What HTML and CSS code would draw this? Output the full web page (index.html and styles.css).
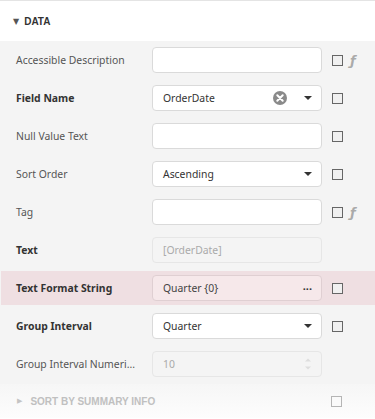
FILE: index.html
```html
<!DOCTYPE html>
<html>
<head>
<meta charset="utf-8">
<link rel="stylesheet" href="styles.css">
</head>
<body>
<div class="panel">
  <div class="section-header"><span class="caret">▼</span><span class="section-title">DATA</span></div>
  <div class="rows">
    <div class="row">
      <div class="label">Accessible Description</div>
      <div class="field"></div>
      <span class="check"></span>
      <span class="fx">ƒ</span>
    </div>
    <div class="row">
      <div class="label bold">Field Name</div>
      <div class="field"><span class="value">OrderDate</span>
        <svg class="clear" width="14" height="14" viewBox="0 0 14 14"><circle cx="7" cy="7" r="7" fill="#8a8a8a"/><path d="M4.3 4.3L9.7 9.7M9.7 4.3L4.3 9.7" stroke="#fff" stroke-width="2" stroke-linecap="round"/></svg>
        <svg class="dd" width="8" height="4" viewBox="0 0 8 4"><path d="M0 0H8L4 4Z" fill="#333"/></svg>
      </div>
      <span class="check"></span>
    </div>
    <div class="row">
      <div class="label">Null Value Text</div>
      <div class="field"></div>
      <span class="check"></span>
    </div>
    <div class="row">
      <div class="label">Sort Order</div>
      <div class="field"><span class="value">Ascending</span>
        <svg class="dd" width="8" height="4" viewBox="0 0 8 4"><path d="M0 0H8L4 4Z" fill="#333"/></svg>
      </div>
      <span class="check"></span>
    </div>
    <div class="row">
      <div class="label">Tag</div>
      <div class="field"></div>
      <span class="check"></span>
      <span class="fx">ƒ</span>
    </div>
    <div class="row">
      <div class="label bold">Text</div>
      <div class="field disabled"><span class="value">[OrderDate]</span></div>
    </div>
    <div class="row highlight">
      <div class="label bold">Text Format String</div>
      <div class="field pink"><span class="value">Quarter {0}</span><span class="dots">···</span></div>
      <span class="check"></span>
    </div>
    <div class="row">
      <div class="label bold">Group Interval</div>
      <div class="field"><span class="value">Quarter</span>
        <svg class="dd" width="8" height="4" viewBox="0 0 8 4"><path d="M0 0H8L4 4Z" fill="#333"/></svg>
      </div>
      <span class="check"></span>
    </div>
    <div class="row">
      <div class="label">Group Interval Numeri...</div>
      <div class="field disabled"><span class="value">10</span>
        <svg class="spin" width="8" height="14" viewBox="0 0 8 14"><path d="M1 4.5L4 1.5L7 4.5Z" fill="#ddd"/><path d="M1 9.5L4 12.5L7 9.5Z" fill="#ddd"/></svg>
      </div>
    </div>
  </div>
  <div class="sub-header">
    <span class="caret-r">▶</span><span class="sub-title">SORT BY SUMMARY INFO</span>
    <span class="check faded"></span>
  </div>
</div>
</body>
</html>
```

FILE: styles.css
```css
html, body {
  margin: 0;
  padding: 0;
  background: #ffffff;
}
body {
  font-family: "Noto Sans", "Open Sans", sans-serif;
  font-size: 10.4px;
  color: #444;
  width: 375px;
  height: 419px;
  overflow: hidden;
}
.panel {
  border-top: 1px solid #e4e4e4;
}
.section-header {
  height: 40px;
  display: flex;
  align-items: center;
  padding-left: 13px;
  background: #fff;
}
.caret {
  font-family: "DejaVu Sans", sans-serif;
  font-size: 8px;
  color: #555;
  margin-right: 5px;
}
.section-title {
  font-family: "Liberation Sans", Arial, sans-serif;
  font-weight: bold;
  font-size: 10px;
  color: #333;
}
.rows {
  background: #f4f4f4;
  padding-top: 2px;
  padding-bottom: 3px;
  display: flex;
  flex-direction: column;
  gap: 4px;
}
.row {
  height: 34px;
  display: grid;
  grid-template-columns: 136px 170px 10px 10px 8px 10px;
  align-items: center;
  padding-left: 16px;
}
.row .check {
  grid-column: 4;
}
.row .fx {
  grid-column: 6;
}
.highlight {
  background: #efdfe2;
  margin-left: 1px;
  padding-left: 15px;
}
.label {
  color: #555;
  white-space: nowrap;
}
.label.bold {
  font-weight: bold;
  color: #333;
}
.field {
  height: 24px;
  border: 1px solid #dadada;
  border-radius: 4px;
  background: #fff;
  display: flex;
  align-items: center;
  padding: 0 9px 0 10px;
  box-sizing: content-box;
  width: 149px;
}
.value {
  flex: 1;
  color: #333;
}
.field.disabled {
  background: #f4f4f4;
  border-color: #e6e6e6;
}
.field.disabled .value {
  color: #aaa;
}
.field.pink {
  background: #f6e8ea;
  border-color: #dfcfd2;
}
.field.pink .value {
  color: #444;
}
.clear {
  margin-right: 17px;
}
.dots {
  color: #333;
  font-weight: bold;
  font-size: 11px;
}
.check {
  width: 9px;
  height: 9px;
  border: 1px solid #666;
  background: #f0f0f0;
  display: block;
}
.fx {
  font-family: "DejaVu Sans", sans-serif;
  font-style: italic;
  font-weight: bold;
  font-size: 13px;
  color: #aaa;
  line-height: 1;
}
.sub-header {
  height: 34px;
  display: flex;
  align-items: center;
  padding-left: 17px;
  background: linear-gradient(#f6f6f6, #fdfdfd);
}
.caret-r {
  font-family: "DejaVu Sans", sans-serif;
  font-size: 7px;
  color: #c4c4c4;
  margin-right: 8px;
}
.sub-title {
  font-family: "Liberation Sans", Arial, sans-serif;
  font-weight: bold;
  font-size: 10px;
  color: #c0c0c0;
  flex: 1;
}
.check.faded {
  border-color: #b5b5b5;
  background: #fafafa;
  margin-right: 33px;
}
```
